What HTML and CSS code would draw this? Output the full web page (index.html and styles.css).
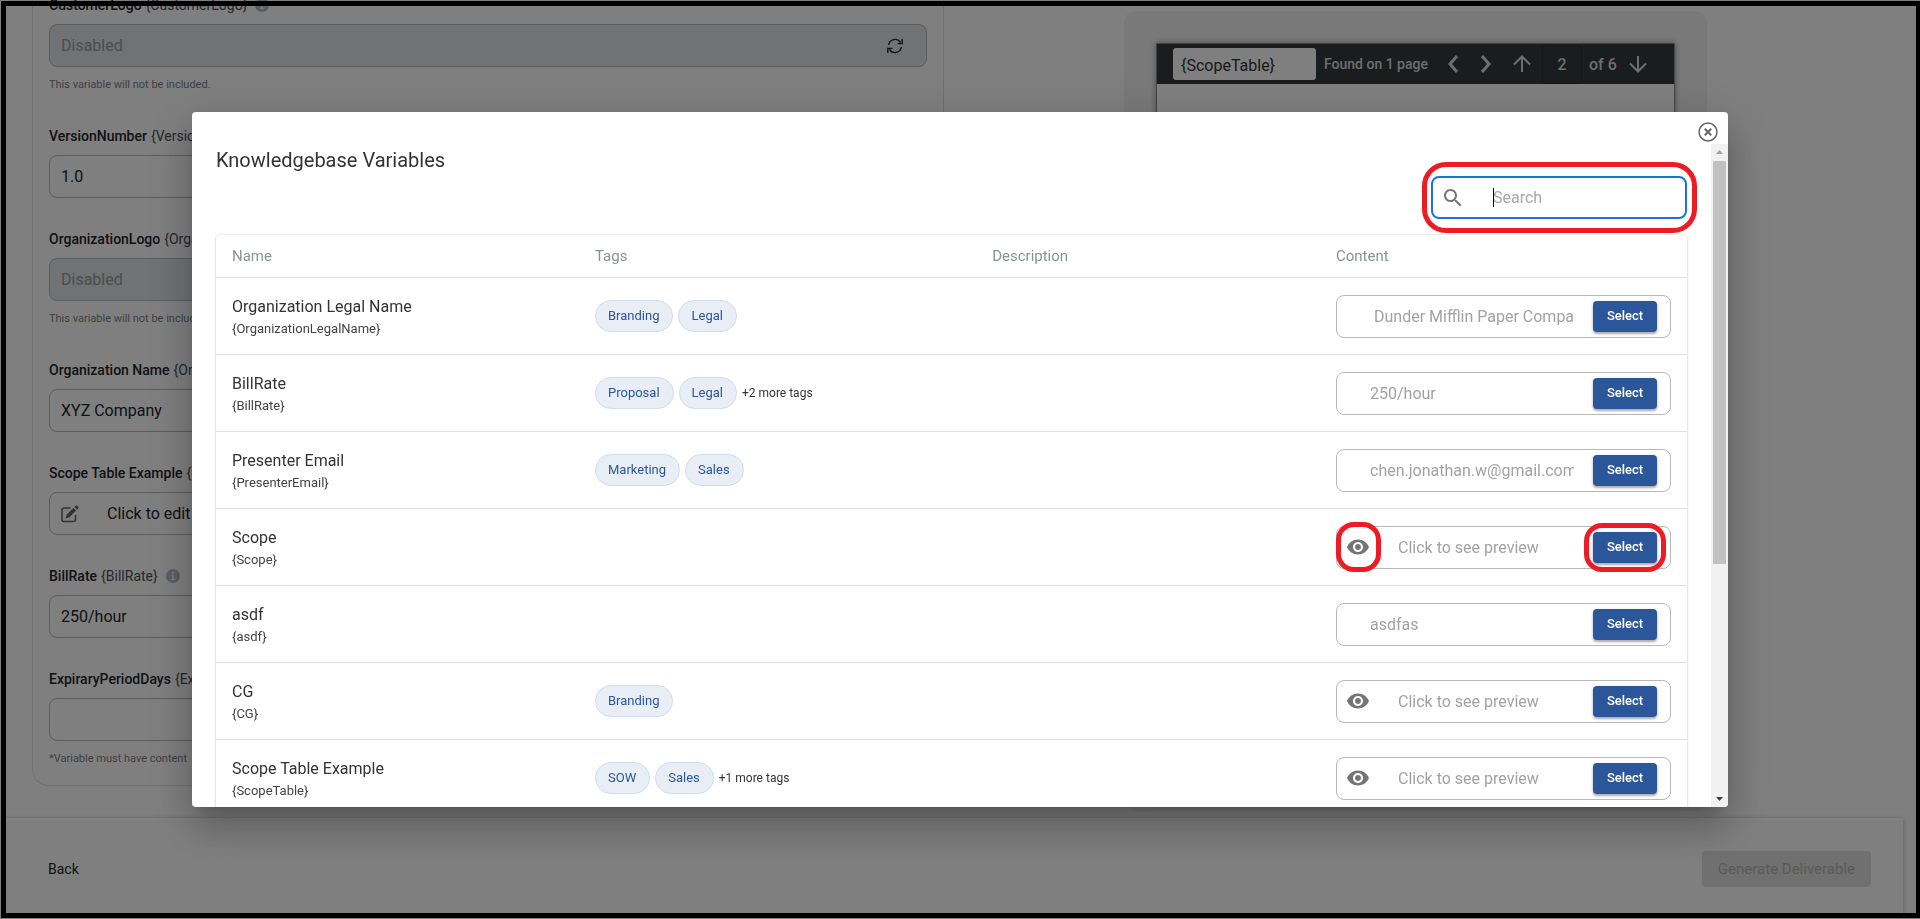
FILE: index.html
```html
<!DOCTYPE html>
<html lang="en">
<head>
<meta charset="utf-8">
<title>Knowledgebase Variables</title>
<link rel="stylesheet" href="styles.css">
</head>
<body>
<svg class="sprite" aria-hidden="true">
  <symbol id="i-info" viewBox="0 0 16 16"><circle cx="8" cy="8" r="7" fill="#b4bcc4"/><path d="M6.4 6.8h2.4v4h1v1.2H6.3v-1.2h1V8h-.9zM7.1 3.8h1.7v1.8H7.1z" fill="#fff"/></symbol>
  <symbol id="i-eye" viewBox="0 0 24 24"><path fill="currentColor" d="M12 4.5C7 4.5 2.73 7.61 1 12c1.73 4.39 6 7.5 11 7.5s9.27-3.11 11-7.5c-1.73-4.39-6-7.5-11-7.5zM12 17c-2.76 0-5-2.24-5-5s2.24-5 5-5 5 2.24 5 5-2.24 5-5 5zm0-8c-1.66 0-3 1.34-3 3s1.34 3 3 3 3-1.34 3-3-1.34-3-3-3z"/></symbol>
  <symbol id="i-search" viewBox="0 0 24 24"><path fill="currentColor" d="M15.5 14h-.79l-.28-.27C15.41 12.59 16 11.11 16 9.5 16 5.91 13.09 3 9.5 3S3 5.91 3 9.5 5.91 16 9.5 16c1.61 0 3.09-.59 4.23-1.57l.27.28v.79l5 4.99L20.49 19l-4.99-5zm-6 0C7.01 14 5 11.99 5 9.5S7.01 5 9.5 5 14 7.01 14 9.5 11.99 14 9.5 14z"/></symbol>
</svg>

<div class="page">
  <main class="workspace">
    <section class="form-card">
      <div class="group">
        <label class="caption" for="f1"><b>CustomerLogo</b> {CustomerLogo} <svg class="info"><use href="#i-info"/></svg></label>
        <div class="field disabled"><input id="f1" type="text" placeholder="Disabled" disabled>
          <svg class="refresh" viewBox="0 0 16 16" fill="none" stroke="currentColor" stroke-width="1.4"><path d="M1.6 7A6.5 6.5 0 0 1 13.6 4.6M14.4 9A6.5 6.5 0 0 1 2.4 11.4M15.2 1v4.6h-4.6M.8 15v-4.6h4.6"/></svg>
        </div>
        <p class="helper">This variable will not be included.</p>
      </div>
      <div class="group">
        <label class="caption" for="f2"><b>VersionNumber</b> {VersionNumber}</label>
        <div class="field"><input id="f2" type="text" value="1.0"></div>
      </div>
      <div class="group">
        <label class="caption" for="f3"><b>OrganizationLogo</b> {OrganizationLogo}</label>
        <div class="field disabled"><input id="f3" type="text" placeholder="Disabled" disabled></div>
        <p class="helper">This variable will not be included.</p>
      </div>
      <div class="group">
        <label class="caption" for="f4"><b>Organization Name</b> {OrganizationName}</label>
        <div class="field"><input id="f4" type="text" value="XYZ Company"></div>
      </div>
      <div class="group">
        <label class="caption" for="f5"><b>Scope Table Example</b> {ScopeTable}</label>
        <div class="field">
          <svg class="edit" viewBox="0 0 18 18"><path d="M9.5 3H3a2 2 0 0 0-2 2v9.500a2 2 0 0 0 2 2h9.500a2 2 0 0 0 2-2V10" fill="none" stroke="currentColor" stroke-width="1.500"/><path d="M12.400 2.900l2.700 2.700-7 7-3.600.9.900-3.600zM13.300 2l1.100-1.100a1.400 1.400 0 0 1 2 0l.7.7a1.400 1.400 0 0 1 0 2L16 4.700z" fill="currentColor"/></svg>
          <input id="f5" type="text" value="Click to edit">
        </div>
      </div>
      <div class="group">
        <label class="caption" for="f6"><b>BillRate</b> {BillRate} <svg class="info"><use href="#i-info"/></svg></label>
        <div class="field"><input id="f6" type="text" value="250/hour"></div>
      </div>
      <div class="group">
        <label class="caption" for="f7"><b>ExpiraryPeriodDays</b> {ExpiraryPeriodDays}</label>
        <div class="field"><input id="f7" type="text"></div>
        <p class="helper">*Variable must have content</p>
      </div>
    </section>
    <section class="viewer">
      <div class="document">
        <div class="toolbar">
          <input class="find" type="text" value="{ScopeTable}" aria-label="Find in document">
          <span class="found">Found on 1 page</span>
          <button class="tool chevron" aria-label="Previous match"><svg viewBox="0 0 12 20"><path d="M10 2L3 10l7 8"/></svg></button>
          <button class="tool chevron" aria-label="Next match"><svg viewBox="0 0 12 20"><path d="M2 2l7 8-7 8"/></svg></button>
          <button class="tool arrow" aria-label="Previous page"><svg viewBox="0 0 18 18"><path d="M9 17V2M1 9.500L9 1.500l8 8"/></svg></button>
          <input class="page-number" type="text" value="2" aria-label="Page">
          <span class="of">of 6</span>
          <button class="tool arrow" aria-label="Next page"><svg viewBox="0 0 18 18"><path d="M9 1v15M1 8.500l8 8 8-8"/></svg></button>
        </div>
      </div>
    </section>
  </main>
  <footer class="actions">
    <button class="back">Back</button>
    <button class="generate" disabled>Generate Deliverable</button>
  </footer>
</div>

<div class="backdrop">
  <div class="dialog" role="dialog" aria-labelledby="title">
    <div class="dialog-top">
      <button class="close" aria-label="Close"><svg viewBox="0 0 20 20" fill="none" stroke="currentColor"><circle cx="10" cy="10" r="9" stroke-width="1.500"/><path d="M6.800 6.800l6.400 6.400M13.200 6.800l-6.400 6.400" stroke-width="2"/></svg></button>
    </div>
    <div class="dialog-body">
      <div class="dialog-content">
        <h2 id="title">Knowledgebase Variables</h2>
        <div class="search">
          <svg><use href="#i-search"/></svg>
          <span class="search-text"><i class="caret"></i><input type="search" placeholder="Search" aria-label="Search"></span>
          <span class="mark"></span>
        </div>
        <table class="variables">
          <colgroup><col class="c-name"><col class="c-tags"><col class="c-desc"><col class="c-content"></colgroup>
          <thead><tr><th>Name</th><th>Tags</th><th>Description</th><th>Content</th></tr></thead>
          <tbody>
            <tr><td><div class="name">Organization Legal Name</div><div class="key">{OrganizationLegalName}</div></td>
              <td><div class="tags"><span class="tag">Branding</span><span class="tag">Legal</span></div></td><td></td>
              <td><div class="content"><input type="text" value=" Dunder Mifflin Paper Company, Inc." aria-label="Organization Legal Name" disabled><span class="pick"><button class="select">Select</button></span></div></td></tr>
            <tr><td><div class="name">BillRate</div><div class="key">{BillRate}</div></td>
              <td><div class="tags"><span class="tag">Proposal</span><span class="tag">Legal</span><span class="more">+2 more tags</span></div></td><td></td>
              <td><div class="content"><input type="text" value="250/hour" aria-label="BillRate" disabled><span class="pick"><button class="select">Select</button></span></div></td></tr>
            <tr><td><div class="name">Presenter Email</div><div class="key">{PresenterEmail}</div></td>
              <td><div class="tags"><span class="tag">Marketing</span><span class="tag">Sales</span></div></td><td></td>
              <td><div class="content"><input type="text" value="chen.jonathan.w@gmail.com" aria-label="Presenter Email" disabled><span class="pick"><button class="select">Select</button></span></div></td></tr>
            <tr><td><div class="name">Scope</div><div class="key">{Scope}</div></td>
              <td></td><td></td>
              <td><div class="content preview"><button class="eye" aria-label="Preview"><svg><use href="#i-eye"/></svg><span class="mark"></span></button><input type="text" value="Click to see preview" aria-label="Scope" disabled><span class="pick"><button class="select">Select</button><span class="mark"></span></span></div></td></tr>
            <tr><td><div class="name">asdf</div><div class="key">{asdf}</div></td>
              <td></td><td></td>
              <td><div class="content"><input type="text" value="asdfas" aria-label="asdf" disabled><span class="pick"><button class="select">Select</button></span></div></td></tr>
            <tr><td><div class="name">CG</div><div class="key">{CG}</div></td>
              <td><div class="tags"><span class="tag">Branding</span></div></td><td></td>
              <td><div class="content preview"><button class="eye" aria-label="Preview"><svg><use href="#i-eye"/></svg></button><input type="text" value="Click to see preview" aria-label="CG" disabled><span class="pick"><button class="select">Select</button></span></div></td></tr>
            <tr><td><div class="name">Scope Table Example</div><div class="key">{ScopeTable}</div></td>
              <td><div class="tags"><span class="tag">SOW</span><span class="tag">Sales</span><span class="more">+1 more tags</span></div></td><td></td>
              <td><div class="content preview"><button class="eye" aria-label="Preview"><svg><use href="#i-eye"/></svg></button><input type="text" value="Click to see preview" aria-label="Scope Table Example" disabled><span class="pick"><button class="select">Select</button></span></div></td></tr>
          </tbody>
        </table>
      </div>
      <div class="scrollbar">
        <svg class="up" viewBox="0 0 17 17"><path d="M5 10l3.500-4 3.500 4z"/></svg>
        <div class="track"><div class="thumb"></div></div>
        <svg class="down" viewBox="0 0 17 17"><path d="M5 7l3.500 4L12 7z"/></svg>
      </div>
    </div>
  </div>
</div>
<div class="frame"></div>
</body>
</html>
```
FILE: styles.css
```css
* { box-sizing: border-box; }
html, body { height: 100%; }
body {
  margin: 0;
  overflow: hidden;
  background: #fff;
  color: #212529;
  font-family: Roboto, "Liberation Sans", sans-serif;
  font-size: 16px;
}
input, button { font: inherit; color: inherit; margin: 0; }
button { border: 0; background: none; padding: 0; }
input { border: 0; background: none; padding: 0; outline: 0; min-width: 0; }
.sprite { display: none; }

.frame {
  position: fixed;
  inset: 1px 0 1px 1px;
  border: 5px solid #000;
  border-right-width: 4px;
  z-index: 20;
  pointer-events: none;
}

/* page behind the dialog */
.page { height: 100%; display: flex; flex-direction: column; }
.workspace {
  flex: 1;
  min-height: 0;
  display: flex;
  align-items: flex-start;
  padding: 0 32px;
}
.form-card {
  width: 912px;
  margin-top: -30px;
  padding: 24px 16px 16px;
  border: 1px solid #dee2e6;
  border-radius: 16px;
}
.group { margin-bottom: 31px; }
.group:last-child { margin-bottom: 0; }
.caption { display: flex; align-items: center; gap: 4px; line-height: 20px; font-size: 14px; color: #495057; white-space: nowrap; }
.caption b { font-weight: 500; color: #212529; }
.info { width: 16px; height: 16px; margin-left: 3px; }
.field {
  height: 43px;
  margin-top: 9px;
  padding: 0 11px;
  display: flex;
  align-items: center;
  border: 1px solid #b8b8b8;
  border-radius: 8px;
}
.field input { flex: 1; height: 24px; }
.field.disabled { background: #e1e4e8; }
.field.disabled input::placeholder { color: #9a9a9a; opacity: 1; }
.refresh { width: 16px; height: 16px; margin-right: 12px; }
.edit { width: 18px; height: 18px; margin-right: 28px; color: #666; }
.helper { margin: 8px 0 0; font-size: 11px; line-height: 20px; color: #7c8186; }

.viewer {
  width: 583px;
  height: 800px;
  margin: 11px 0 0 180px;
  padding: 32px 32px 0;
  background: #f3f3f3;
  border-radius: 12px;
}
.document {
  height: 760px;
  background: #fff;
  border: 1px solid #8a8a8a;
  box-shadow: 0 0 6px rgba(0,0,0,.4);
}
.toolbar {
  display: flex;
  align-items: center;
  height: 40px;
  padding-left: 16px;
  background: #36383c;
  color: #ddd;
  font-size: 14px;
  font-weight: 500;
}
.find {
  width: 143px;
  height: 32px;
  padding: 2px 8px 0;
  background: #fff;
  border-radius: 3px;
  color: #333;
  font-size: 16px;
  font-weight: 400;
}
.found { margin-left: 8px; width: 123px; white-space: nowrap; }
.tool { display: flex; }
.tool path { fill: none; stroke: #ddd; stroke-width: 2; }
.chevron { width: 33px; }
.chevron svg { width: 12px; height: 20px; }
.chevron path { stroke-width: 3; }
.arrow svg { width: 18px; height: 18px; }
.page-number {
  width: 40px;
  height: 39px;
  margin: 0 7px 0 11px;
  text-align: center;
  border: 1px solid #2c2e31;
  border-radius: 4px;
  font-size: 16px;
}
.of { width: 40px; font-size: 16px; }

.actions {
  display: flex;
  align-items: center;
  justify-content: space-between;
  height: 101px;
  margin-right: 17px;
  padding: 0 32px 0 48px;
  background: #fff;
  box-shadow: 0 1px 5px rgba(0,0,0,.3);
  font-size: 14px;
}
.generate {
  height: 36px;
  padding: 0 16px;
  border-radius: 4px;
  background: #e0e0e0;
  color: #b5b5b5;
  font-size: 15px;
}

/* dialog */
.backdrop {
  position: fixed;
  inset: 0;
  display: flex;
  align-items: center;
  justify-content: center;
  background: rgba(0,0,0,.5);
  z-index: 10;
}
.dialog {
  width: 80%;
  height: calc(100% - 224px);
  display: flex;
  flex-direction: column;
  overflow: hidden;
  background: #fff;
  border-radius: 4px;
  box-shadow: 0 11px 15px -7px rgba(0,0,0,.2), 0 24px 38px 3px rgba(0,0,0,.14), 0 9px 46px 8px rgba(0,0,0,.12);
}
.dialog-top { display: flex; justify-content: flex-end; align-items: center; height: 32px; padding: 8px 10px 0; }
.close { display: flex; color: #666; }
.close svg { width: 20px; height: 20px; }
.dialog-body { flex: 1; min-height: 0; display: flex; }
.dialog-content { flex: 1; padding: 0 24px; overflow: hidden; display: flex; flex-direction: column; }
h2 { margin: 0; flex: none; font-size: 20px; line-height: 32px; font-weight: 400; color: #333; }
.search {
  position: relative;
  align-self: flex-end;
  flex: none;
  display: flex;
  align-items: center;
  width: 256px;
  height: 43px;
  padding: 0 8px;
  border: 2px solid #1976d2;
  border-radius: 8px;
}
.search svg { width: 24px; height: 24px; color: #757575; }
.search-text { position: relative; flex: 1; display: flex; margin-left: 28px; }
.search-text input { width: 100%; appearance: none; }
.search-text input::placeholder { color: #a8a8a8; opacity: 1; }
.caret { position: absolute; inset: 0 auto 0 0; width: 1px; background: #000; }
.mark {
  position: absolute;
  inset: -9px;
  border: 5px solid #ed1c24;
  border-radius: 18px;
  pointer-events: none;
}
.search .mark { inset: -16px -12px -16px -11px; border-radius: 24px; }

.variables {
  width: 100%;
  flex: none;
  margin-top: 16px;
  table-layout: fixed;
  border-collapse: separate;
  border-spacing: 0;
  border-radius: 4px;
  box-shadow: 0 1px 3px rgba(0,0,0,.2), 0 0 2px rgba(0,0,0,.1);
}
.c-name { width: 363px; }
.c-tags { width: 27%; }
.c-desc { width: auto; }
.c-content { width: 367px; }
th { height: 43px; padding: 0 16px; text-align: left; font-size: 15px; font-weight: 400; color: #8a9299; border-bottom: 1px solid #e0e0e0; }
td { height: 77px; padding: 0 16px; border-bottom: 1px solid #e0e0e0; }
.name { font-size: 16px; line-height: 24px; color: #333; }
.key { font-size: 13px; line-height: 19px; color: #444; }
.tags { display: flex; align-items: center; gap: 5px; font-size: 12px; }
.tag {
  height: 32px;
  padding: 0 13px 0 12px;
  line-height: 29px;
  border: 1px solid #d3dcec;
  border-radius: 16px;
  background: #e9eef6;
  color: #2b579a;
  font-size: 13px;
}
.more { color: #333; }
.content {
  display: flex;
  align-items: center;
  height: 43px;
  padding: 0 13px 0 33px;
  border: 1px solid #b8b8b8;
  border-radius: 8px;
}
.content.preview { padding-left: 9px; }
.content input { flex: 1; height: 24px; color: #a2a2a2; }
.eye { position: relative; display: flex; margin-right: 28px; color: #757575; }
.eye svg { width: 24px; height: 24px; }
.eye .mark { inset: -13px -11px -13px -10px; }
.pick { position: relative; display: flex; margin-left: 19px; }
.select {
  width: 64px;
  height: 31px;
  padding-bottom: 2px;
  border-radius: 4px;
  background: #2b579a;
  color: #fff;
  font-size: 13px;
  font-weight: 500;
  box-shadow: 0 2px 2px rgba(0,0,0,.25), 0 1px 4px rgba(0,0,0,.15);
}

.scrollbar { width: 17px; display: flex; flex-direction: column; background: #f1f1f1; }
.scrollbar svg { width: 17px; height: 17px; }
.up { fill: #a0a0a0; }
.down { fill: #404040; }
.track { flex: 1; padding: 0 2px; }
.thumb { height: 64%; background: #c1c1c1; }
```
